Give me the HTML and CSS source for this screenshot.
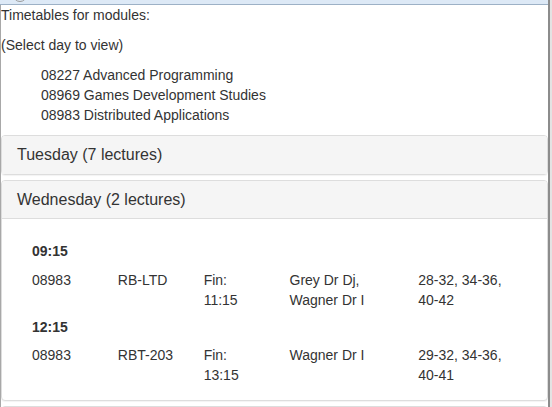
FILE: index.html
```html
<!DOCTYPE html>
<html>
<head>
<meta charset="utf-8">
<link rel="stylesheet" href="styles.css">
</head>
<body>
<div class="window">
  <div class="main">
    <div class="topbar">
      <svg class="topicon" width="14" height="4" viewBox="0 0 14 4"><circle cx="7" cy="-5" r="6.5" fill="none" stroke="#9a9a9a" stroke-width="1"/></svg>
    </div>
    <div class="content">
      <p class="intro">Timetables for modules:</p>
      <p class="intro">(Select day to view)</p>
      <ul class="modules">
        <li>08227 Advanced Programming</li>
        <li>08969 Games Development Studies</li>
        <li>08983 Distributed Applications</li>
      </ul>
      <div class="panel-group">
        <div class="panel">
          <div class="panel-heading"><h4 class="panel-title">Tuesday (7 lectures)</h4></div>
        </div>
        <div class="panel">
          <div class="panel-heading"><h4 class="panel-title">Wednesday (2 lectures)</h4></div>
          <div class="panel-body">
            <h5 class="time">09:15</h5>
            <div class="lecture">
              <div class="cell">08983</div>
              <div class="cell">RB-LTD</div>
              <div class="cell">Fin: 11:15</div>
              <div class="cell">Grey Dr Dj, Wagner Dr I</div>
              <div class="cell">28-32, 34-36, 40-42</div>
            </div>
            <h5 class="time">12:15</h5>
            <div class="lecture">
              <div class="cell">08983</div>
              <div class="cell">RBT-203</div>
              <div class="cell">Fin: 13:15</div>
              <div class="cell">Wagner Dr I</div>
              <div class="cell">29-32, 34-36, 40-41</div>
            </div>
          </div>
        </div>
        <div class="panel">
          <div class="panel-heading panel-heading-empty"></div>
        </div>
      </div>
    </div>
  </div>
  <div class="edge"></div>
</div>
</body>
</html>
```
FILE: styles.css
```css
html, body {
  margin: 0;
  padding: 0;
  background: #ffffff;
}
body {
  font-family: "Liberation Sans", Arial, sans-serif;
  font-size: 14px;
  line-height: 20px;
  color: #333333;
  overflow: hidden;
  height: 407px;
}
.window {
  display: flex;
  height: 407px;
}
.main {
  flex: 1;
  min-width: 0;
  display: flex;
  flex-direction: column;
}
.edge {
  width: 2px;
  border-left: 2px solid #8c8c8c;
  background: #e3e3e3;
}
.topbar {
  height: 4px;
  background: #dde9f6;
  border-bottom: 1px solid #9db1c6;
  padding-left: 13px;
  overflow: hidden;
}
.topicon {
  display: block;
}
.content {
  flex: 1;
  border-left: 1px solid #a8a8a8;
  overflow: hidden;
}
.intro {
  margin: 0 0 10px 0;
}
.modules {
  list-style: none;
  margin: 0 0 10px 0;
  padding-left: 40px;
}
.panel-group {
  display: flex;
  flex-direction: column;
  gap: 5px;
}
.panel {
  border: 1px solid #dddddd;
  border-radius: 4px;
  background: #ffffff;
  box-shadow: 0 1px 1px rgba(0, 0, 0, 0.05);
}
.panel-heading {
  background: #f5f5f5;
  padding: 10px 15px;
  border-radius: 3px 3px 0 0;
}
.panel-heading-empty {
  height: 18px;
}
.panel-title {
  margin: 0;
  font-size: 16px;
  font-weight: normal;
  line-height: 1.1;
  color: #333333;
}
.panel-body {
  border-top: 1px solid #dddddd;
  padding: 15px;
}
.time {
  margin: 10px 0;
  font-size: 14px;
  font-weight: bold;
  line-height: 1.1;
  padding: 0 15px;
}
.lecture {
  display: grid;
  grid-template-columns: 2fr 2fr 2fr 3fr 3fr;
}
.cell {
  padding: 0 15px;
}
```
